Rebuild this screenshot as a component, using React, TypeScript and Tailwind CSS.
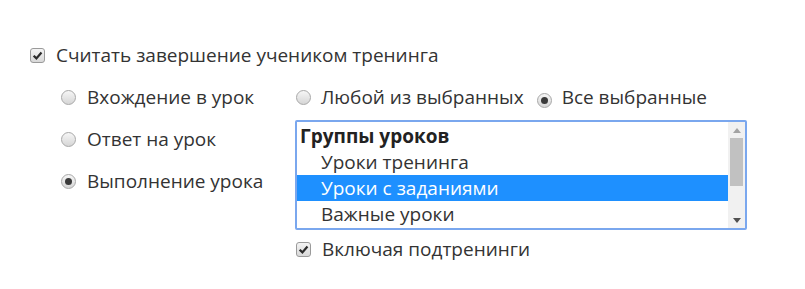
import React from "react";

function Check() {
  return (
    <span className="inline-flex w-[15px] h-[15px] shrink-0 items-center justify-center rounded-[3px] border border-[#9a9a9a] bg-gradient-to-b from-[#f4f4f4] to-[#d8d8d8]">
      <svg width="11" height="11" viewBox="0 0 10 10">
        <path d="M1.5 5.2 L4 7.6 L8.6 2.2" fill="none" stroke="#2a2a2a" strokeWidth="2" />
      </svg>
    </span>
  );
}

function Radio({ on }: { on?: boolean }) {
  return (
    <span className="inline-flex w-[15px] h-[15px] shrink-0 items-center justify-center rounded-full border border-[#a8a8a8] bg-gradient-to-b from-[#f6f6f6] to-[#d6d6d6]">
      {on && <span className="w-[7px] h-[7px] rounded-full bg-[#3a3a3a]" />}
    </span>
  );
}

export default function App() {
  const font = { fontFamily: '"Open Sans", "Liberation Sans", sans-serif' };
  return (
    <div className="w-[805px] h-[289px] bg-white text-[#333] text-[19px]" style={font}>
      <div className="pt-[44px] pl-[30px]">
        <div className="flex items-center gap-[11px] h-[22px]">
          <Check />
          <span>Считать завершение учеником тренинга</span>
        </div>
        <div className="flex mt-[20px]">
          <div className="pl-[31px] w-[266px] flex flex-col">
            <div className="flex items-center gap-[11px] h-[22px]">
              <Radio />
              <span>Вхождение в урок</span>
            </div>
            <div className="flex items-center gap-[11px] h-[22px] mt-[20px]">
              <Radio />
              <span>Ответ на урок</span>
            </div>
            <div className="flex items-center gap-[11px] h-[22px] mt-[20px]">
              <Radio on />
              <span>Выполнение урока</span>
            </div>
          </div>
          <div className="flex flex-col">
            <div className="flex items-center h-[22px]">
              <Radio />
              <span className="ml-[10px]">Любой из выбранных</span>
              <span className="ml-[13px]"><Radio on /></span>
              <span className="ml-[10px]">Все выбранные</span>
            </div>
            <div className="mt-[12px] -ml-[1px] w-[452px] h-[110px] border-2 border-[#7aa7ee] rounded-[2px] flex bg-white">
              <div className="flex-1 flex flex-col pt-[1px]">
                <div className="h-[26px] flex items-center pl-[3px] font-bold text-[#222]">Группы уроков</div>
                <div className="h-[26px] flex items-center pl-[24px]">Уроки тренинга</div>
                <div className="h-[26px] flex items-center pl-[24px] bg-[#1e90ff] text-white">Уроки с заданиями</div>
                <div className="h-[26px] flex items-center pl-[24px]">Важные уроки</div>
              </div>
              <div className="w-[17px] bg-[#f1f1f1] flex flex-col items-center">
                <div className="h-[16px] flex items-center justify-center">
                  <svg width="8" height="5" viewBox="0 0 8 5"><path d="M0 5 L4 0 L8 5 Z" fill="#a3a3a3" /></svg>
                </div>
                <div className="w-[13px] h-[48px] bg-[#c1c1c1]" />
                <div className="flex-1" />
                <div className="h-[16px] flex items-center justify-center">
                  <svg width="8" height="5" viewBox="0 0 8 5"><path d="M0 0 L4 5 L8 0 Z" fill="#505050" /></svg>
                </div>
              </div>
            </div>
            <div className="flex items-center gap-[11px] h-[22px] mt-[8px]">
              <Check />
              <span>Включая подтренинги</span>
            </div>
          </div>
        </div>
      </div>
    </div>
  );
}
